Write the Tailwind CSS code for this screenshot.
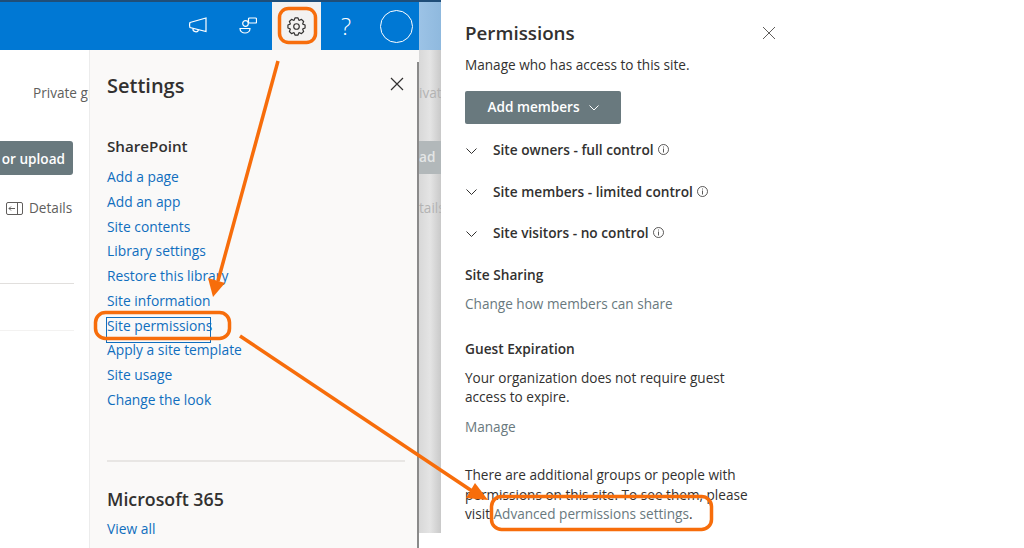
<!DOCTYPE html>
<html lang="en">
<head>
  <meta charset="UTF-8">
  <title>Site permissions</title>
  <script src="https://cdn.jsdelivr.net/npm/@tailwindcss/browser@4"></script>
</head>
<body class="bg-white overflow-hidden font-['Open_Sans',sans-serif]">
  <div class="relative w-[1024px] h-[548px] overflow-hidden flex bg-white">

    <!-- sharepoint page behind the panels -->
    <div class="w-[441px] shrink-0 flex flex-col h-[533px]">
      <div class="h-[50px] shrink-0 flex border-t-2 border-[#1f4e79]">
        <div class="flex-1 bg-[#0078d4] flex items-center justify-end">
          <div class="w-[52px] flex justify-center">
            <svg class="w-[18px] h-[19px]" viewBox="0 0 18 19" fill="none" stroke="white" stroke-width="1.2"><path d="M1 5.500 17 1v13.500L1 10.500C.5 9 .5 7 1 5.500Z"/><path d="M4 11.500c-.5 3.500 4.500 4.500 5.500 1.500"/></svg>
          </div>
          <div class="w-[48px] flex justify-center">
            <svg class="w-[18px] h-[18px]" viewBox="0 0 18 18" fill="none" stroke="white" stroke-width="1.2"><rect x="9.500" y="1" width="8" height="5" rx="1"/><circle cx="6.500" cy="6.500" r="2.800"/><path d="M1 11.500h10c0 6-10 6-10 0Z"/></svg>
          </div>
          <div class="w-[49px] h-full bg-[#f3f2f1] flex items-center justify-center">
            <svg class="w-[19px] h-[19px]" viewBox="-12 -12 24 24" fill="none" stroke="#323130" stroke-width="1.500" stroke-linejoin="round"><circle r="3.500"/><polygon points="8.08,-2.94 10.83,-1.91 10.83,1.91 8.08,2.94 7.79,3.63 9.01,6.31 6.31,9.01 3.63,7.79 2.94,8.08 1.91,10.83 -1.91,10.83 -2.94,8.08 -3.63,7.79 -6.31,9.01 -9.01,6.31 -7.79,3.63 -8.08,2.94 -10.83,1.91 -10.83,-1.91 -8.08,-2.94 -7.79,-3.63 -9.01,-6.31 -6.31,-9.01 -3.63,-7.79 -2.94,-8.08 -1.91,-10.83 1.91,-10.83 2.94,-8.08 3.63,-7.79 6.31,-9.01 9.01,-6.31 7.79,-3.63"/></svg>
          </div>
          <div class="w-[50px] flex justify-center text-white text-[24px] font-light leading-none">?</div>
          <div class="w-[48px] flex justify-start pl-[9px]">
            <div class="w-[33px] h-[33px] rounded-full border border-white"></div>
          </div>
        </div>
        <div class="w-[22px] bg-gradient-to-r from-[#9cc3e6] to-[#8fb9de]"></div>
      </div>

      <div class="flex-1 flex min-h-0">
        <!-- visible sliver of the library, left of settings -->
        <div class="w-[89px] shrink-0 overflow-hidden text-[13.6px] text-[#605e5c]">
          <div class="pt-[33px] pl-[33px] whitespace-nowrap leading-[20px]">Private group</div>
          <div class="mt-[38px] flex justify-end">
            <div class="w-[73px] mr-[16px] h-[34px] pt-[2px] bg-[#69797e] rounded-r-[3px] flex items-center justify-end pr-[8px] text-white font-semibold whitespace-nowrap">or upload</div>
          </div>
          <div class="mt-[23px] flex items-center pl-[6px] gap-[6px] leading-[20px]">
            <svg class="w-[17px] h-[13px] shrink-0" viewBox="0 0 17 13" fill="none" stroke="#605e5c"><rect x=".5" y=".5" width="16" height="12" rx="1.500"/><path d="M11.500 1v11M9 6.500H3M5 4.500l-2 2 2 2"/></svg>
            <span>Details</span>
          </div>
          <div class="mt-[65px] mr-[15px] h-px bg-[#e1dfdd]"></div>
          <div class="mt-[46px] mr-[15px] h-px bg-[#f3f2f1]"></div>
        </div>

        <!-- settings panel -->
        <div class="w-[330px] shrink-0 bg-[#faf9f8] border-l border-[#ececec] pl-[17px] relative h-[498px]">
          <div class="absolute right-0 top-[12px] bottom-0 w-[2px] bg-[#8a8a8a]"></div>
          <div class="flex items-center justify-between pt-[22px] pr-[15px] leading-[28px]">
            <h2 class="text-[20px] font-semibold text-[#323130]">Settings</h2>
            <svg class="w-[14px] h-[14px] -mt-[4px]" viewBox="0 0 14 14" stroke="#323130" stroke-width="1.200"><path d="M1 1l12 12M13 1 1 13"/></svg>
          </div>
          <h3 class="mt-[35px] text-[15.2px] font-semibold text-[#323130] leading-[22px]">SharePoint</h3>
          <ul class="mt-[8px] text-[13.8px] text-[#106ebe] leading-[24.75px]">
            <li>Add a page</li>
            <li>Add an app</li>
            <li>Site contents</li>
            <li>Library settings</li>
            <li>Restore this library</li>
            <li>Site information</li>
            <li class="relative">Site permissions<div class="absolute left-[-1px] top-[3px] w-[105px] h-[26px] border border-[#106ebe]"></div></li>
            <li>Apply a site template</li>
            <li>Site usage</li>
            <li>Change the look</li>
          </ul>
          <div class="mt-[47px] mr-[14px] h-[2px] bg-[#e8e6e4]"></div>
          <h3 class="mt-[25px] text-[17.8px] font-semibold text-[#323130] leading-[24px]">Microsoft 365</h3>
          <div class="mt-[6px] text-[13.8px] text-[#106ebe] leading-[24px]">View all</div>
        </div>

        <!-- dimmed strip of the page -->
        <div class="w-[22px] shrink-0 bg-gradient-to-r from-[#d8d8d8] via-[#e4e4e4] to-[#c9c9c9] text-[13.6px] text-[#b3b3b3] overflow-hidden">
          <div class="pt-[33px] leading-[20px]">ivat</div>
          <div class="mt-[38px] h-[33px] bg-[#b2b8ba] text-[#e4e6e6] font-semibold flex items-center">ad</div>
          <div class="mt-[24px] leading-[20px]">tails</div>
        </div>
      </div>
    </div>

    <!-- permissions panel -->
    <div class="w-[340px] shrink-0 pl-[24px] pr-[5px]">
      <div class="flex items-center justify-between pt-[18px] leading-[30px]">
        <h2 class="text-[18.8px] font-semibold text-[#323130]">Permissions</h2>
        <svg class="w-[14px] h-[14px]" viewBox="0 0 14 14" stroke="#605e5c" stroke-width="1"><path d="M1 1l12 12M13 1 1 13"/></svg>
      </div>
      <p class="mt-[5px] text-[13.6px] text-[#323130] leading-[24px]">Manage who has access to this site.</p>
      <div class="mt-[14px] w-[156px] h-[33px] bg-[#69797e] rounded-[2px] flex items-center justify-center gap-[9px] text-white text-[13.6px] font-semibold">
        Add members
        <svg class="w-[10px] h-[6px]" viewBox="0 0 10 6" fill="none" stroke="white"><path d="m.5.5 4.500 4.500L9.500.5"/></svg>
      </div>
      <ul class="mt-[6px] text-[13.7px] font-semibold text-[#323130]">
        <li class="flex items-center h-[41.5px] pl-[1px]">
          <svg class="w-[11px] h-[6px] mr-[16px]" viewBox="0 0 11 6" fill="none" stroke="#323130"><path d="m.5.5 5 5 5-5"/></svg>
          Site owners - full control
          <svg class="w-[11px] h-[11px] ml-[4px] -mt-[2px]" viewBox="0 0 11 11" fill="none" stroke="#323130" stroke-width=".8"><circle cx="5.500" cy="5.500" r="5"/><path d="M5.500 4.500V8.500M5.500 2.500v1"/></svg>
        </li>
        <li class="flex items-center h-[41.5px] pl-[1px]">
          <svg class="w-[11px] h-[6px] mr-[16px]" viewBox="0 0 11 6" fill="none" stroke="#323130"><path d="m.5.5 5 5 5-5"/></svg>
          Site members - limited control
          <svg class="w-[11px] h-[11px] ml-[4px] -mt-[2px]" viewBox="0 0 11 11" fill="none" stroke="#323130" stroke-width=".8"><circle cx="5.500" cy="5.500" r="5"/><path d="M5.500 4.500V8.500M5.500 2.500v1"/></svg>
        </li>
        <li class="flex items-center h-[41.5px] pl-[1px]">
          <svg class="w-[11px] h-[6px] mr-[16px]" viewBox="0 0 11 6" fill="none" stroke="#323130"><path d="m.5.5 5 5 5-5"/></svg>
          Site visitors - no control
          <svg class="w-[11px] h-[11px] ml-[4px] -mt-[2px]" viewBox="0 0 11 11" fill="none" stroke="#323130" stroke-width=".8"><circle cx="5.500" cy="5.500" r="5"/><path d="M5.500 4.500V8.500M5.500 2.500v1"/></svg>
        </li>
      </ul>
      <h3 class="mt-[8.5px] text-[13.7px] font-semibold text-[#323130] leading-[24px]">Site Sharing</h3>
      <p class="mt-[5px] text-[13.6px] text-[#69797e] leading-[24px]">Change how members can share</p>
      <h3 class="mt-[21px] text-[13.7px] font-semibold text-[#323130] leading-[24px]">Guest Expiration</h3>
      <p class="mt-[7px] text-[13.6px] text-[#323130] leading-[19px] w-[290px]">Your organization does not require guest access to expire.</p>
      <p class="mt-[9px] text-[13.6px] text-[#69797e] leading-[24px]">Manage</p>
      <p class="mt-[26px] text-[13.6px] text-[#323130] leading-[19.5px] w-[290px]">There are additional groups or people with permissions on this site. To see them, please visit <span class="text-[#69797e]">Advanced permissions settings</span>.</p>
    </div>

    <!-- orange annotations -->
    <svg class="absolute inset-0 w-[1024px] h-[548px] pointer-events-none" viewBox="0 0 1024 548" fill="none" stroke="#f76d0b" stroke-width="3.500">
      <rect x="279.5" y="8.500" width="36" height="34" rx="9"/>
      <rect x="95.500" y="312.500" width="134" height="26" rx="10"/>
      <rect x="491.500" y="496.500" width="220" height="33" rx="10"/>
      <path d="M278 61 218 281"/>
      <path d="M213 297 208 278 225 283Z" fill="#f76d0b" stroke="none"/>
      <path d="M240 336 472 491"/>
      <path d="M488 500 475 483 466 498Z" fill="#f76d0b" stroke="none"/>
    </svg>
  </div>
</body>
</html>
